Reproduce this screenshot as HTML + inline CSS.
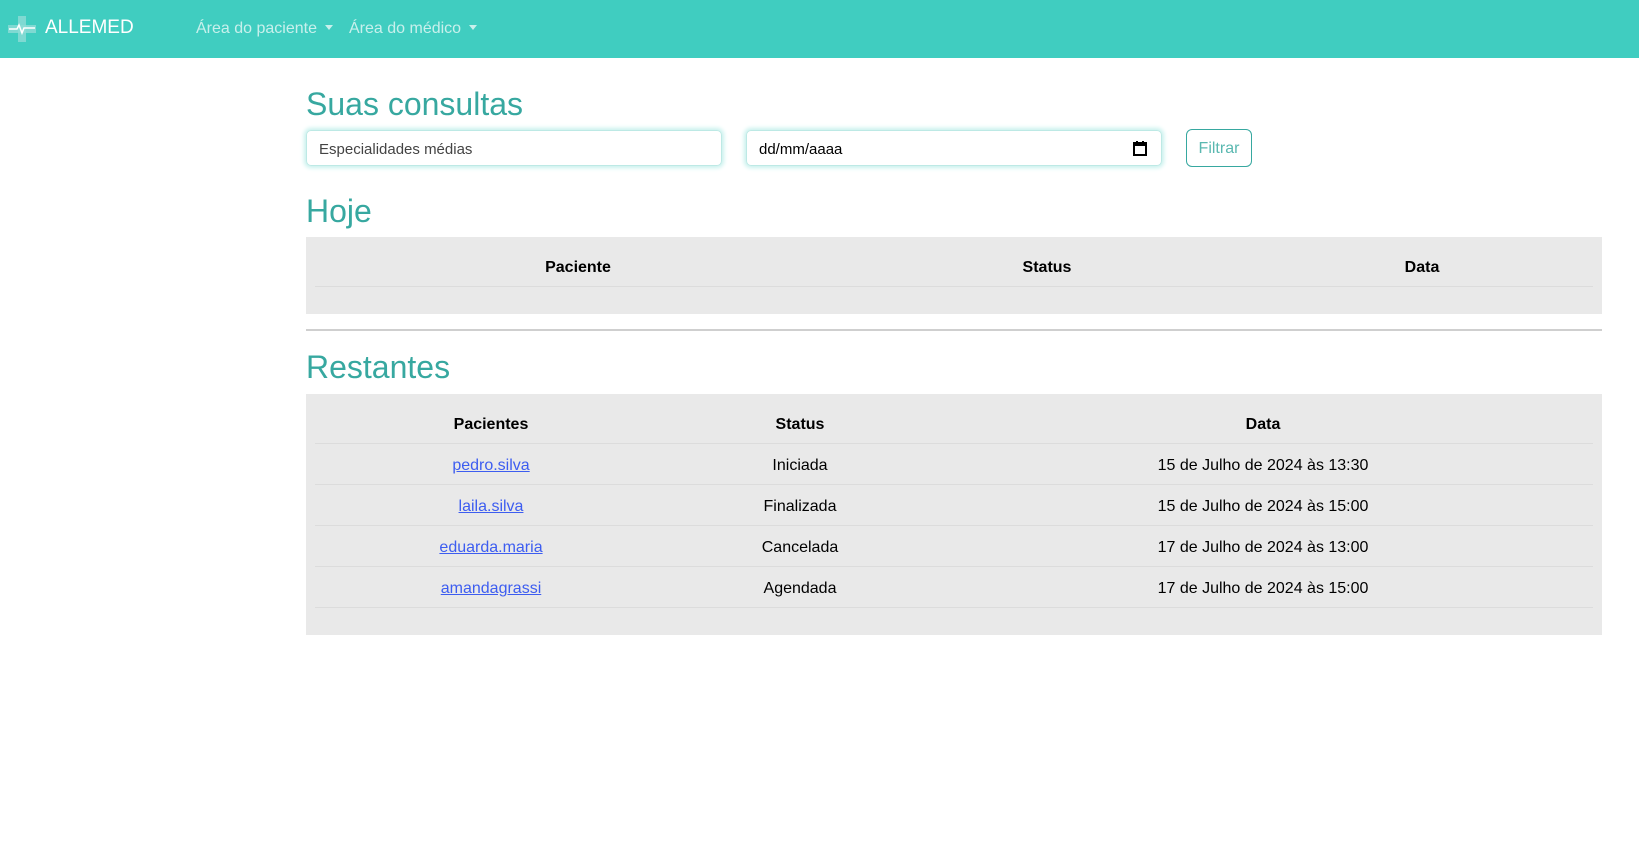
<!DOCTYPE html>
<html><head><meta charset="utf-8"><style>
*{box-sizing:border-box;margin:0;padding:0}
body{width:1639px;height:853px;background:#fff;font-family:"Liberation Sans",sans-serif;color:#000;position:relative;overflow:hidden}
.nav{position:absolute;left:0;top:0;width:1639px;height:58px;background:#40cdc0}
.brand{position:absolute;left:45px;top:17px;color:#fff;font-size:19px}
.ni{position:absolute;top:20px;color:#c8f0ec;font-size:16px}
.ni:after{content:"";display:inline-block;margin-left:8px;vertical-align:3px;border-left:4px solid transparent;border-right:4px solid transparent;border-top:5px solid #c8f0ec}
h1{position:absolute;font-weight:normal;color:#37a8a0;font-size:32px;left:306px}
.inp{position:absolute;top:130px;height:36px;width:416px;border:1px solid #bde9e5;border-radius:5px;box-shadow:0 0 4px 2px #c8f1ed;font-size:15px;padding:10px 12px;color:#444}
.btn{position:absolute;left:1186px;top:129px;width:66px;height:38px;border:1px solid #37a8a0;border-radius:6px;color:#5ab8b0;font-size:16px;text-align:center;line-height:38px}
.panel{position:absolute;left:306px;width:1296px;background:#e9e9e9}
.row{position:absolute;left:9px;right:9px;border-bottom:1px solid #dcdcdc;height:41px}
.c{position:absolute;top:13px;transform:translateX(-50%);font-size:16px;white-space:nowrap}
.b{font-weight:bold}
a{color:#3d5df0;text-decoration:underline}
</style></head><body>
<div class="nav">
<svg style="position:absolute;left:8px;top:16px" width="28" height="26" viewBox="0 0 28 26"><rect x="10" y="0" width="8" height="26" fill="#8fdcd6" opacity=".8"/><rect x="0" y="9" width="28" height="8" fill="#8fdcd6" opacity=".8"/><path d="M1 13h8l2-4 3 8 2-5h11" stroke="#fff" stroke-width="1.5" fill="none"/></svg>
<div class="brand">ALLEMED</div>
<div class="ni" style="left:196px">Área do paciente</div>
<div class="ni" style="left:349px">Área do médico</div>
</div>
<h1 style="top:86px">Suas consultas</h1>
<div class="inp" style="left:306px">Especialidades médias</div>
<div class="inp" style="left:746px;color:#000">dd/mm/aaaa
<svg style="position:absolute;right:14px;top:10px" width="14" height="15" viewBox="0 0 14 15"><rect x="1" y="2" width="12" height="12" fill="none" stroke="#000" stroke-width="2"/><rect x="1" y="2" width="12" height="3" fill="#000"/><rect x="3" y="0" width="2" height="3" fill="#000"/><rect x="9" y="0" width="2" height="3" fill="#000"/></svg></div>
<div class="btn">Filtrar</div>
<h1 style="top:193px">Hoje</h1>
<div class="panel" style="top:237px;height:77px">
<div class="row" style="top:9px">
<div class="c b" style="left:263px">Paciente</div>
<div class="c b" style="left:732px">Status</div>
<div class="c b" style="left:1107px">Data</div>
</div></div>
<div style="position:absolute;left:306px;top:329px;width:1296px;height:2px;background:#cfcfcf"></div>
<h1 style="top:349px">Restantes</h1>
<div class="panel" style="top:394px;height:241px">
<div class="row" style="top:9px"><div class="c b" style="left:176px">Pacientes</div><div class="c b" style="left:485px">Status</div><div class="c b" style="left:948px">Data</div></div>
<div class="row" style="top:50px"><div class="c" style="left:176px"><a>pedro.silva</a></div><div class="c" style="left:485px">Iniciada</div><div class="c" style="left:948px">15 de Julho de 2024 às 13:30</div></div>
<div class="row" style="top:91px"><div class="c" style="left:176px"><a>laila.silva</a></div><div class="c" style="left:485px">Finalizada</div><div class="c" style="left:948px">15 de Julho de 2024 às 15:00</div></div>
<div class="row" style="top:132px"><div class="c" style="left:176px"><a>eduarda.maria</a></div><div class="c" style="left:485px">Cancelada</div><div class="c" style="left:948px">17 de Julho de 2024 às 13:00</div></div>
<div class="row" style="top:173px"><div class="c" style="left:176px"><a>amandagrassi</a></div><div class="c" style="left:485px">Agendada</div><div class="c" style="left:948px">17 de Julho de 2024 às 15:00</div></div>
</div>
</body></html>
